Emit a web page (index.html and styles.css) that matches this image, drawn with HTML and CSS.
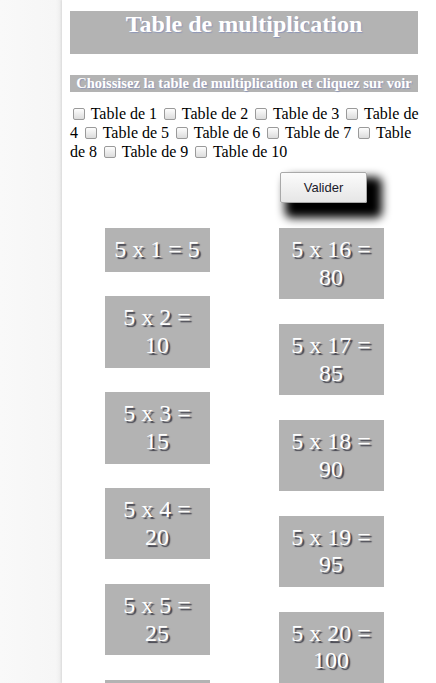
FILE: index.html
```html
<!DOCTYPE html>
<html lang="fr">
<head>
<meta charset="utf-8">
<title>Table de multiplication</title>
<link rel="stylesheet" href="styles.css">
</head>
<body>
<div class="side"></div>
<main class="page">
  <h1 class="title">Table de multiplication</h1>
  <h2 class="subtitle">Choissisez la table de multiplication et cliquez sur voir</h2>
  <form class="choices">
    <p class="checks">
      <input type="checkbox"> Table de 1 <input type="checkbox"> Table de 2 <input type="checkbox"> Table de 3 <input type="checkbox"> Table de 4 <input type="checkbox"> Table de 5 <input type="checkbox"> Table de 6 <input type="checkbox"> Table de 7 <input type="checkbox"> Table de 8 <input type="checkbox"> Table de 9 <input type="checkbox"> Table de 10
    </p>
    <div class="actions"><button type="button" class="btn">Valider</button></div>
  </form>
  <div class="results">
    <div class="col">
      <div class="tile">5 x 1 = 5</div>
      <div class="tile">5 x 2 = 10</div>
      <div class="tile">5 x 3 = 15</div>
      <div class="tile">5 x 4 = 20</div>
      <div class="tile">5 x 5 = 25</div>
      <div class="tile">5 x 6 = 30</div>
    </div>
    <div class="col">
      <div class="tile">5 x 16 = 80</div>
      <div class="tile">5 x 17 = 85</div>
      <div class="tile">5 x 18 = 90</div>
      <div class="tile">5 x 19 = 95</div>
      <div class="tile">5 x 20 = 100</div>
    </div>
  </div>
</main>
</body>
</html>
```

FILE: styles.css
```css
html, body {
  margin: 0;
  padding: 0;
}
body {
  display: flex;
  background: #f8f8f8;
  font-family: "Liberation Serif", "Times New Roman", serif;
  font-size: 16px;
  color: #000;
  overflow: hidden;
  height: 683px;
}
.side {
  width: 62px;
  flex: none;
  background: linear-gradient(to right, #f9f9f9 0%, #f6f6f6 90%, #ececec 100%);
}
.page {
  flex: none;
  width: 348px;
  padding: 11px 26px 0 8px;
  background: #fff;
  box-shadow: -1px 0 2px rgba(0,0,0,0.08);
}
.title {
  margin: 0;
  height: 43px;
  box-sizing: border-box;
  padding-top: 0;
  background: #b3b3b3;
  color: #fff;
  font-size: 24px;
  font-weight: bold;
  line-height: 27px;
  text-align: center;
  text-shadow: 1px 1px 1px #8d96b8;
}
.subtitle {
  margin: 21px 0 0;
  height: 17px;
  background: #b3b3b3;
  color: #fff;
  font-size: 14.5px;
  font-weight: bold;
  line-height: 17px;
  text-align: center;
  text-shadow: 1px 1px 1px #8d96b8;
}
.choices {
  margin: 0;
}
.checks {
  margin: 12px -5px 0 0;
  line-height: 19px;
}
.checks input {
  -webkit-appearance: none;
  appearance: none;
  box-sizing: border-box;
  width: 12px;
  height: 12px;
  margin: 0 2px 0 3px;
  vertical-align: -1px;
  border: 1px solid #9a9a9a;
  border-radius: 2px;
  background: linear-gradient(#fdfdfd, #dcdcdc);
}
.actions {
  display: flex;
  padding-left: 210px;
  margin-top: 11px;
}
.btn {
  width: 87px;
  height: 31px;
  font-family: "Liberation Sans", Arial, sans-serif;
  font-size: 13px;
  color: #1a1a2a;
  background: linear-gradient(#fbfbfb, #e6e6e6);
  border: 1px solid #a9a9a9;
  border-radius: 2px;
  box-shadow: 10px 10px 10px 5px #000;
  padding: 0;
}
.results {
  display: flex;
  margin-top: 25px;
}
.col {
  flex: 1;
  display: flex;
  flex-direction: column;
  align-items: center;
  gap: 24.5px;
}
.tile {
  box-sizing: border-box;
  width: 105px;
  padding: 8px 5px;
  background: #b3b3b3;
  color: #fff;
  font-size: 24px;
  line-height: 27.7px;
  text-align: center;
  text-shadow: 2px 2px 1px #45454f;
}
```
